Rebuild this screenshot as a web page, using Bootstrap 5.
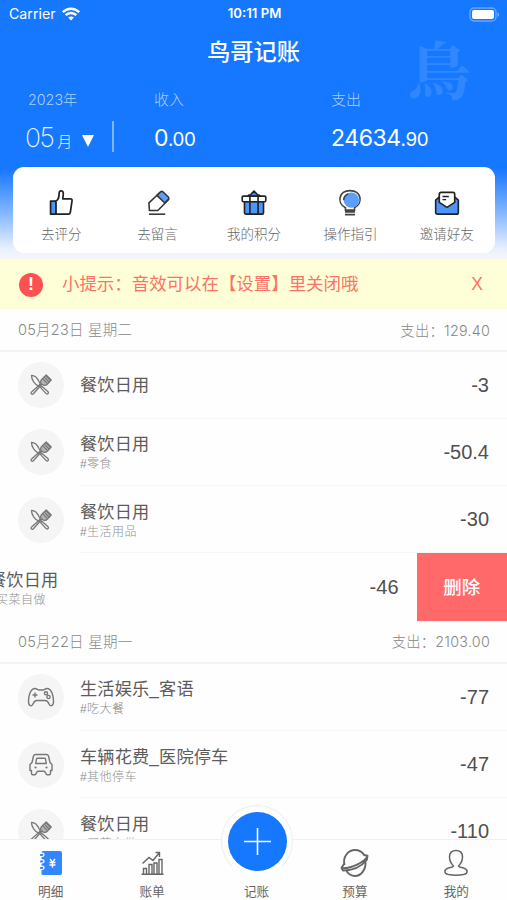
<!DOCTYPE html>
<html lang="zh-CN">
<head>
<meta charset="utf-8">
<meta name="viewport" content="width=device-width, initial-scale=1">
<title>鸟哥记账</title>
<link href="https://cdn.jsdelivr.net/npm/bootstrap@5.3.0/dist/css/bootstrap.min.css" rel="stylesheet">
<style>
body{font-family:"Liberation Sans","Noto Sans CJK SC",sans-serif;color:#666;background:#fefefe}
svg{display:block;flex:none}
.phone{width:507px;height:900px}
.inter{font-family:Inter,"Noto Sans CJK SC",sans-serif}
.hero{height:259px;background:linear-gradient(#1677ff 0,#1677ff 168px,#3d8eff 185px,#8fbdff 217px,#e6effd 248px,#f4f4fb 256px)}
.status{height:28px;font-size:14.2px;padding:0 7px 0 9px}
.status>*{flex:1 1 0}
.clock{font-weight:600;font-size:13.2px}
.app-title{height:48px;line-height:49px;font-size:23.2px;font-weight:500}
.seal{right:36px;top:27px;font:700 63px/80px "Noto Serif CJK SC","Noto Sans CJK SC",serif;color:#3087ff}
.totals{height:91px;padding:13px 0 0 25px}
.lbl{font-size:15px;line-height:22px;height:26px;color:#a9cfff;font-weight:300}
.lbl.inter{font-size:14.3px}
.amt{font-size:23px;line-height:46px;letter-spacing:-.45px}
.amt small{font-size:18.8px}
.month{font-size:26.5px;line-height:44px;letter-spacing:-1.500px;font-weight:200;color:#e6f2ff;width:48px;white-space:nowrap}
.month small{font-size:15px;padding-left:4px}
.c-month{width:129px}.c-in{width:177px}
.tri{border:6.5px solid transparent;border-top:12px solid #fff;border-bottom:0;margin:3px 18px 0 9px}
.rule{width:1.5px;height:31px;background:#7fb5ff;margin-top:-7px}
.quick{height:86px;margin:0 12px 0 13px;border-radius:11px;font-size:13.5px;padding-top:20px;color:#666;font-weight:300}
.quick svg{width:26px;height:29px}
.quick span{line-height:20px;margin-top:9px}
.tip{height:50px;background:#ffffd7;color:#fc7268;font-size:17.45px;padding:1px 24px 0 19px}
.bang{width:24px;height:24px;background:#ff5052;font-size:18px;margin-right:19px}
.day{height:42.5px;font-size:14.3px;color:#888;padding:2px 17px 0 18px;border-bottom:2px solid #f3f3f3;letter-spacing:.25px;font-weight:300}
.day span:first-child{font-size:14.5px}
.day.flat{height:43px}
.entry{height:67.3px;padding-left:18px}
.disc{width:46px;height:46px;background:#f5f5f5;margin-right:16px}
.body-cell{border-bottom:1px solid #f7f7f7;padding-right:18px;height:100%}
.name{font-size:17.2px;line-height:24px;color:#5c5c5c;letter-spacing:.15px;padding-top:1px}
.tag{font-size:12px;line-height:16px;color:#909090;font-weight:300;letter-spacing:.45px}
.cost{font-size:20px;color:#505050}
.swiped{margin-left:-91px;width:507.5px}
.del{width:91px;background:#ff696a;font-size:18.5px;font-weight:500;padding-top:2px}
.tabs{height:61px;background:#fefefe;border-top:1px solid #f1f1f1;font-size:12.6px;padding-top:8px}
.tabs span{line-height:18px;margin-top:5px}
.tabs .pad{height:30px}
.tabs .mid{margin-left:6px}
.ring{width:72px;height:72px;left:221px;top:-35px;background:#fefefe;border:1.5px solid #eee;border-bottom-color:transparent}
.fab{width:59px;height:59px;background:#1677ff}
</style>
<script src="https://cdn.jsdelivr.net/npm/bootstrap@5.3.0/dist/js/bootstrap.bundle.min.js"></script>
</head>
<body>
<svg width="0" height="0" class="position-absolute">
<defs>
<g id="meal" fill="none" stroke="#777" stroke-width="1.3" stroke-linejoin="round" stroke-linecap="round">
<path d="M1.500 1.300c3 .2 6 2.800 7.500 6.200l1.500 3-2 1.500C5.500 10.500 1.300 6.500 1.500 1.300z"/>
<path d="M11.800 12.300l6 5.200c1.600 1.500-.4 3.500-1.900 1.900l-5.300-5.800z"/>
<path d="M12.300 9.800l-8.900 9.900c-1.400 1.400-3.200-.4-1.800-1.800l8.300-7.400"/>
<path d="M11.300 10.300C9.800 7.800 11 6 12.300 4.800L16.200 1l5 5-3.700 4c-1.800 1.800-3.700 1.900-5.200.3z" fill="#b4b4b4"/>
<path d="M13.300 5.400l3.600 3.600M14.800 3.700l3.800 3.800M16.300 2.200l3.800 3.800" stroke-width="1.100"/>
</g>
</defs>
</svg>
<main class="phone d-flex flex-column overflow-hidden position-relative">
<header class="hero text-white position-relative flex-shrink-0">
<div class="seal position-absolute">鳥</div>
<div class="status d-flex align-items-center inter position-relative">
<div class="d-flex align-items-center" style="gap:6px"><span>Carrier</span>
<svg width="18" height="14" viewBox="0 0 18 14" fill="none" stroke="#fff" stroke-width="2.500"><path d="M.8 5.200c4.700-4.700 11.700-4.700 16.400 0M3.700 8.200c3-3 7.600-3 10.600 0"/><path d="M9 13.600l-2.900-3c1.600-1.500 4.200-1.500 5.800 0z" fill="#fff" stroke="none"/></svg></div>
<div class="clock text-center">10:11 PM</div>
<div class="d-flex justify-content-end"><svg width="31" height="15" viewBox="0 0 31 15"><rect x="1" y="1" width="26" height="13" rx="4" fill="none" stroke="#67a7ff" stroke-width="1.300"/><rect x="3" y="3" width="22" height="9" rx="2" fill="#fff"/><path d="M28.500 5.200v4.600c2-.8 2-3.800 0-4.600z" fill="#78b1ff"/></svg></div>
</div>
<h1 class="app-title text-center mb-0">鸟哥记账</h1>
<div class="totals d-flex position-relative">
<div class="c-month"><div class="lbl inter" style="padding-left:3px">2023年</div><div class="d-flex align-items-center"><div class="month inter">05<small>月</small></div><i class="tri"></i><i class="rule"></i></div></div>
<div class="c-in"><div class="lbl">收入</div><div class="amt inter">0<small>.00</small></div></div>
<div><div class="lbl">支出</div><div class="amt inter">24634<small>.90</small></div></div>
</div>
<nav class="quick bg-white row g-0 text-center">
<div class="col d-flex flex-column align-items-center">
<svg viewBox="0 0 28 32" fill="none" stroke="#222" stroke-width="1.900" stroke-linejoin="round"><path d="M2.500 15.500h6V30h-6z" fill="#4c96fb"/><path d="M8.500 15.500c3.200-1.500 3.300-4.500 3.500-9 .1-3 4-3.200 4.500 0 .2 2.500-.2 4.500-.6 6.500h8.500c1.300 0 2 .8 1.800 2l-1.900 13c-.2 1.300-1 2-2.200 2H8.500z" fill="#fff"/></svg><span>去评分</span></div>
<div class="col d-flex flex-column align-items-center">
<svg viewBox="0 0 28 32" fill="none" stroke="#333" stroke-width="1.700" stroke-linejoin="round"><path d="M4 17.500L17 5.300l8.800 8.400L13.800 26H4.500z" fill="#fff"/><path d="M12.800 9.200L17 5.300q1.200-1 2.400 0l6 5.700q1.200 1.200 0 2.600L21.500 17.700z" fill="#5b9ffa"/><path d="M4 30h18"/></svg><span>去留言</span></div>
<div class="col d-flex flex-column align-items-center">
<svg viewBox="0 0 28 32" fill="none" stroke="#222" stroke-width="1.800" stroke-linejoin="round"><path d="M7 10.500c.5-1.500 1.500-2 3-2L14 4.500l4 4c1.500 0 2.500.5 3 2z" fill="#3f8dfa"/><path d="M3.500 16h21v12q0 2-2 2h-17q-2 0-2-2z" fill="#4c96fb"/><rect x="1" y="10" width="26" height="6.300" rx="1.300" fill="#fff"/><path d="M9.500 10v20M18.500 10v20"/></svg><span>我的积分</span></div>
<div class="col d-flex flex-column align-items-center">
<svg viewBox="0 0 28 32" fill="none" stroke="#444" stroke-width="1.800"><path d="M9 25.500v-2.500C-1 18 1.500 4 14 4s15 14 5 19v2.500z" fill="#fff"/><circle cx="15.500" cy="14.500" r="8.500" fill="#5b9ffa" stroke="none"/><path d="M7 14.500q.3-5.300 5-6.800"/><path d="M8.500 27.500h11M8.500 30.500h11"/></svg><span>操作指引</span></div>
<div class="col d-flex flex-column align-items-center">
<svg viewBox="0 0 28 32" fill="none" stroke="#222" stroke-width="1.800" stroke-linejoin="round"><path d="M1.500 14.500L6 10.500h16l4.500 4V28q0 2-2 2h-21q-2 0-2-2z" fill="#4c96fb"/><path d="M5.500 17V8q0-2 2-2h13q2 0 2 2v9L14 22.500z" fill="#fff"/><path d="M9 10.500h7M9 14h4" stroke-width="1.500"/></svg><span>邀请好友</span></div>
</nav>
</header>
<div class="tip d-flex align-items-center flex-shrink-0">
<div class="bang rounded-circle text-white d-flex align-items-center justify-content-center fw-bold">!</div>
<span>小提示：音效可以在【设置】里关闭哦</span><span class="ms-auto">X</span>
</div>
<section class="flex-fill overflow-hidden" style="min-height:0">
<div class="day inter d-flex align-items-center justify-content-between"><span>05月23日 星期二</span><span>支出：129.40</span></div>
<div class="entry d-flex align-items-center"><div class="disc rounded-circle d-flex align-items-center justify-content-center flex-shrink-0"><svg width="22" height="22" viewBox="0 0 22 22"><use href="#meal"/></svg></div><div class="body-cell flex-fill d-flex align-items-center justify-content-between"><div class="name">餐饮日用</div><div class="cost">-3</div></div></div>
<div class="entry d-flex align-items-center"><div class="disc rounded-circle d-flex align-items-center justify-content-center flex-shrink-0"><svg width="22" height="22" viewBox="0 0 22 22"><use href="#meal"/></svg></div><div class="body-cell flex-fill d-flex align-items-center justify-content-between"><div><div class="name">餐饮日用</div><div class="tag">#零食</div></div><div class="cost">-50.4</div></div></div>
<div class="entry d-flex align-items-center"><div class="disc rounded-circle d-flex align-items-center justify-content-center flex-shrink-0"><svg width="22" height="22" viewBox="0 0 22 22"><use href="#meal"/></svg></div><div class="body-cell flex-fill d-flex align-items-center justify-content-between"><div><div class="name">餐饮日用</div><div class="tag">#生活用品</div></div><div class="cost">-30</div></div></div>
<div class="d-flex">
<div class="entry swiped d-flex align-items-center flex-shrink-0"><div class="disc flex-shrink-0 bg-transparent"></div><div class="body-cell border-0 flex-fill d-flex align-items-center justify-content-between"><div><div class="name">餐饮日用</div><div class="tag">#买菜自做</div></div><div class="cost">-46</div></div></div>
<div class="del text-white d-flex align-items-center justify-content-center">删除</div>
</div>
<div class="day flat inter d-flex align-items-center justify-content-between"><span>05月22日 星期一</span><span>支出：2103.00</span></div>
<div class="entry d-flex align-items-center"><div class="disc rounded-circle d-flex align-items-center justify-content-center flex-shrink-0"><svg width="28" height="22" viewBox="0 0 28 22" fill="none" stroke="#777" stroke-width="1.400" stroke-linejoin="round"><path d="M8 2.500c2 0 2.500 1.500 4 1.500h4c1.500 0 2-1.500 4-1.500 4.500 0 6.500 7 6.500 13 0 5-3.500 5-4.500 2.500-.8-2-1.800-3.500-3.800-3.500H9.800C7.800 14.500 6.800 16 6 18c-1 2.500-4.500 2.500-4.500-2.500 0-6 2-13 6.500-13z"/><path d="M8 6.500v5M5.500 9h5"/><circle cx="19" cy="7.300" r="1.600"/><circle cx="21.500" cy="11" r="1.600"/></svg></div><div class="body-cell flex-fill d-flex align-items-center justify-content-between"><div><div class="name">生活娱乐_客语</div><div class="tag">#吃大餐</div></div><div class="cost">-77</div></div></div>
<div class="entry d-flex align-items-center"><div class="disc rounded-circle d-flex align-items-center justify-content-center flex-shrink-0"><svg width="24" height="23" viewBox="0 0 24 23" fill="none" stroke="#777" stroke-width="1.400" stroke-linejoin="round"><path d="M6.500 1.500h11q1.500 0 2 1.500l1.500 6.500 2 2v6h-1.500v3q0 1.300-1.300 1.300h-1.900q-1.300 0-1.300-1.300l-1.500-2.200h-7L7 20.500q0 1.300-1.300 1.300H3.800q-1.300 0-1.300-1.300v-3H1v-6l2-2L4.500 3q.5-1.500 2-1.500z"/><path d="M8.500 5.200h7q.8 0 1 .8l.8 4.500H6.700L7.500 6q.2-.8 1-.8z"/><g fill="#777" stroke="none"><circle cx="6.500" cy="14.500" r="1.100"/><circle cx="17.500" cy="14.500" r="1.100"/></g></svg></div><div class="body-cell flex-fill d-flex align-items-center justify-content-between"><div><div class="name">车辆花费_医院停车</div><div class="tag">#其他停车</div></div><div class="cost">-47</div></div></div>
<div class="entry d-flex align-items-center"><div class="disc rounded-circle d-flex align-items-center justify-content-center flex-shrink-0"><svg width="22" height="22" viewBox="0 0 22 22"><use href="#meal"/></svg></div><div class="body-cell flex-fill d-flex align-items-center justify-content-between"><div><div class="name">餐饮日用</div><div class="tag">#买菜自做</div></div><div class="cost">-110</div></div></div>
</section>
<nav class="tabs position-relative flex-shrink-0 row g-0 text-center">
<div class="col d-flex flex-column align-items-center"><svg width="24" height="30" viewBox="0 0 24 30"><path d="M4 3h17q2 0 2 2v20q0 2-2 2H4q-1.500 0-1.500-1.500v-21Q2.500 3 4 3z" fill="#3486fc"/><g fill="#3486fc" stroke="#fefefe" stroke-width="1.300"><path d="M1 5.500q4-1 4 1.200T1 8.500M1 12q4-1 4 1.200T1 15M1 18.500q4-1 4 1.200T1 21.500"/></g><path d="M11 11l2.500 3.200L16 11M13.500 14v5.500M10.500 14.500h6M10.500 17h6" stroke="#fff" stroke-width="1.400" fill="none"/></svg><span>明细</span></div>
<div class="col d-flex flex-column align-items-center"><svg width="24" height="30" viewBox="0 0 24 30" fill="none" stroke="#666" stroke-width="1.400"><path d="M1.500 26.300h22M3.500 26v-5.500h3V26M9 26v-9.500h3V26M14 26V15h3v11M19 26V11.500h3V26M2.500 15.500l6.500-6 4 3 6.500-8M15.500 4.500h4v4.500"/></svg><span>账单</span></div>
<div class="col d-flex flex-column align-items-center"><div class="pad"></div><span class="mid">记账</span></div>
<div class="col d-flex flex-column align-items-center"><svg width="30" height="30" viewBox="0 0 30 30" fill="none" stroke="#666" stroke-width="1.900" stroke-linejoin="round"><path d="M4.500 17C2.500 9 8 2 15 2c4 0 7.500 2.200 9.500 5.500M25.500 14c.5 7.500-4.500 14-10.500 14-3.800 0-6.500-2-8.500-5"/><path d="M24 7l3.500.8-.7 4.200C21 19 12 22.500 3 22.500L1.500 20l2.800-4.500M27.500 7.800C25 14 11 21 1.500 20"/></svg><span>预算</span></div>
<div class="col d-flex flex-column align-items-center"><svg width="26" height="30" viewBox="0 0 26 30" fill="none" stroke="#666" stroke-width="1.500" stroke-linejoin="round"><path d="M10.500 18C8 15.500 6.500 12 6.500 9c0-4 2.500-6.500 6.500-6.500s6.500 2.500 6.500 6.500c0 3-1.500 6.500-4 9 .5 1.500 2.500 1.300 5 2 4.800 1.400 4.800 5.500 0 6.500-4 .7-11 .7-15 0-4.800-1-4.800-5.100 0-6.500 2.500-.7 4.500-.5 5-2z"/></svg><span>我的</span></div>
<div class="ring rounded-circle position-absolute d-flex align-items-center justify-content-center p-0"><div class="fab rounded-circle d-flex align-items-center justify-content-center"><svg width="27" height="27" viewBox="0 0 27 27" stroke="#fff" stroke-width="1.600"><path d="M13.500 0v27M0 13.500h27"/></svg></div></div>
</nav>
</main>
</body>
</html>
